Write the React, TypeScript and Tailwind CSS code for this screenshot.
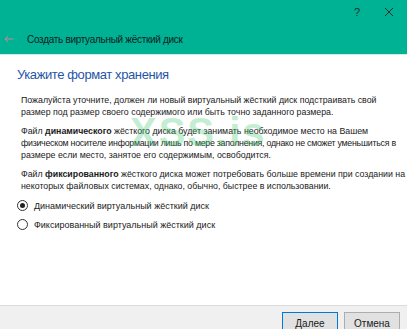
const font = { fontFamily: '"Liberation Sans", Arial, sans-serif' };

const Radio = ({ checked, label }: { checked: boolean; label: string }) => (
  <label className="flex h-[12px] items-center gap-[6px] text-[9px] leading-[12px] text-[#1a1a1a]">
    <span className="flex h-[11px] w-[11px] items-center justify-center rounded-full border border-[#333] bg-white">
      {checked && <span className="h-[5px] w-[5px] rounded-full bg-[#222]" />}
    </span>
    <span className="whitespace-nowrap">{label}</span>
  </label>
);

export default function App() {
  return (
    <div className="relative flex h-[329px] w-[407px] flex-col overflow-hidden bg-white" style={font}>
      <header className="h-[55px] border-b border-[#c9efe7] bg-[#00b294]">
        <div className="flex h-[24px] items-center justify-end gap-[24px] pr-[13px] text-[#1f2f2c]">
          <span className="text-[11px]">?</span>
          <svg width="10" height="10" viewBox="0 0 10 10" className="stroke-[#1f2f2c]">
            <path d="M1 1L9 9M9 1L1 9" strokeWidth="1" />
          </svg>
        </div>
        <div className="flex h-[30px] items-center gap-[13px] pl-[4px]">
          <svg width="10" height="8" viewBox="0 0 10 8" className="stroke-[#c98798]" fill="none">
            <path d="M9.5 4H1M4 1L1 4L4 7" strokeWidth="1" />
          </svg>
          <span className="whitespace-nowrap text-[10px] tracking-[-0.3px] text-[#10211e]">Создать виртуальный жёсткий диск</span>
        </div>
      </header>

      <main className="flex-1 pl-[17px]">
        <h1 className="mt-[10px] whitespace-nowrap text-[13px] tracking-[-0.4px] text-[#1f56a8]">Укажите формат хранения</h1>
        <div className="mt-[9px] flex flex-col gap-[7px] whitespace-nowrap pl-[4px] text-[8.8px] leading-[12px] text-[#1a1a1a]">
          <p>
            Пожалуйста уточните, должен ли новый виртуальный жёсткий диск подстраивать свой
            <br />
            размер под размер своего содержимого или быть точно заданного размера.
          </p>
          <p>
            Файл <b>динамического</b> жёсткого диска будет занимать необходимое место на Вашем
            <br />
            <span className="tracking-[-0.25px]">
              физическом носителе информации лишь по мере заполнения, однако не сможет уменьшиться в
            </span>
            <br />
            размере если место, занятое его содержимым, освободится.
          </p>
          <p>
            Файл <b>фиксированного</b> жёсткого диска может потребовать больше времени при создании на
            <br />
            некоторых файловых системах, однако, обычно, быстрее в использовании.
          </p>
        </div>
        <div className="mt-[8px] flex flex-col gap-[7px]">
          <Radio checked label="Динамический виртуальный жёсткий диск" />
          <Radio checked={false} label="Фиксированный виртуальный жёсткий диск" />
        </div>
      </main>

      <footer className="flex h-[24px] items-start justify-end gap-[6px] border-t border-[#dcdcdc] bg-[#f0f0f0] pr-[7px] pt-[6px]">
        <button className="h-[22px] w-[56px] border border-[#0078d7] bg-[#e1e1e1] text-[10px] text-[#1a1a1a]">Далее</button>
        <button className="h-[22px] w-[56px] border border-[#adadad] bg-[#e1e1e1] text-[10px] text-[#1a1a1a]">Отмена</button>
      </footer>

      <div
        aria-hidden="true"
        className="pointer-events-none absolute left-[130px] top-[112px] select-none text-[40px] font-bold leading-none tracking-[2px] text-[#3cc86a] opacity-30"
      >
        XSS.is
      </div>
    </div>
  );
}
